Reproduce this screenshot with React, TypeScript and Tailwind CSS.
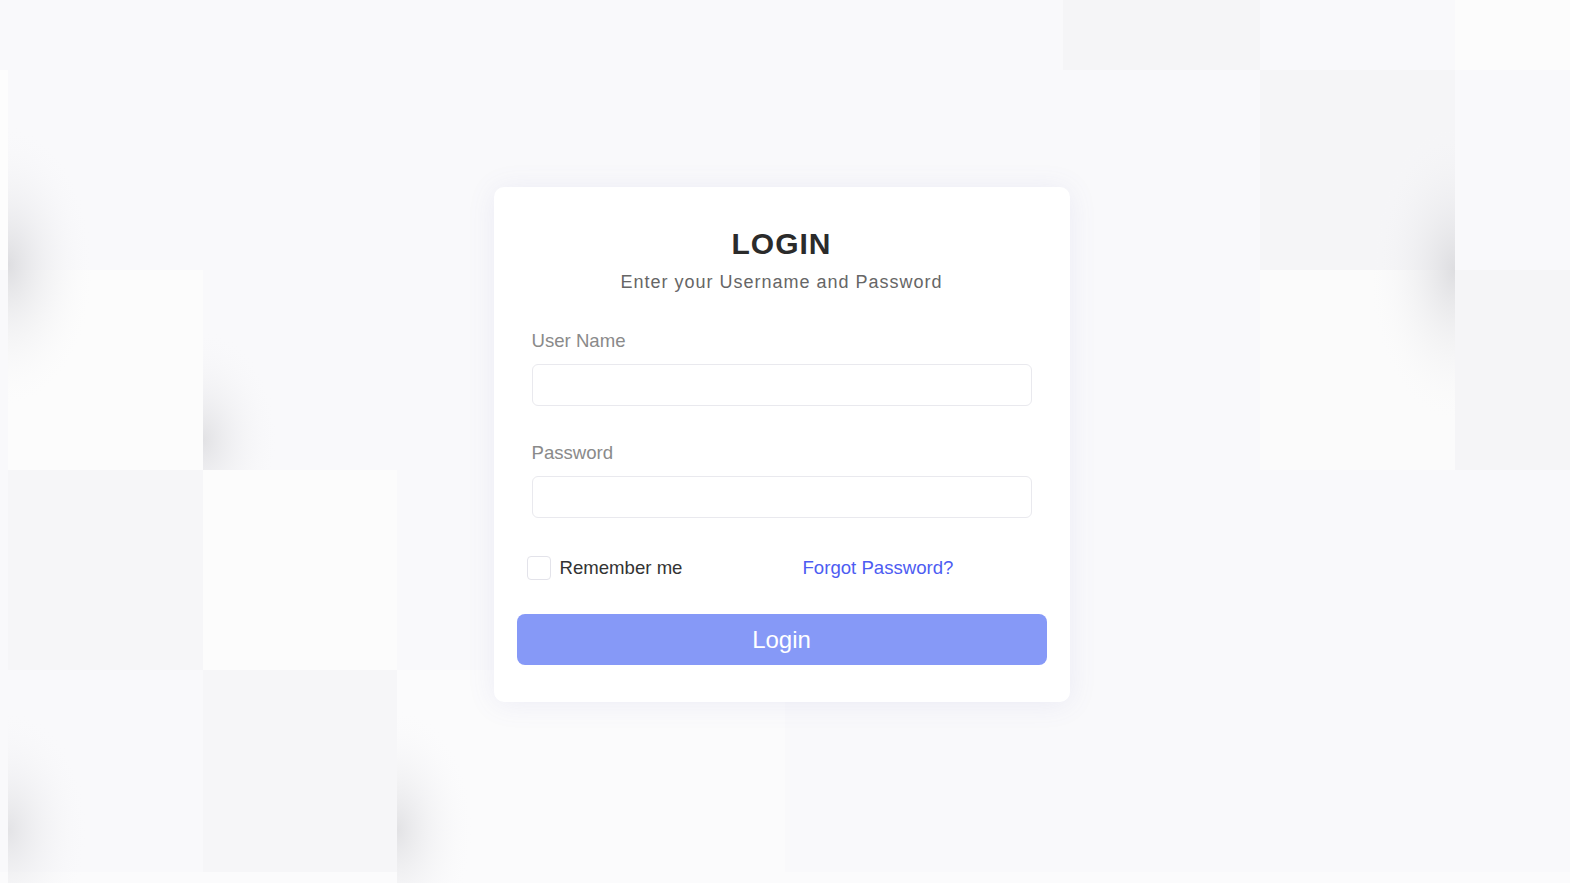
import React from 'react'

const font = { fontFamily: '"Liberation Sans", Arial, sans-serif' }

// soft tiled backdrop, drawn as one picture
function Backdrop() {
  return (
    <svg className="absolute inset-0 h-full w-full" viewBox="0 0 1570 883" preserveAspectRatio="none">
      <defs>
        <radialGradient id="sh" cx="0.5" cy="0.5" r="0.5">
          <stop offset="0" stopColor="#dcdcdf" stopOpacity="0.95" />
          <stop offset="0.45" stopColor="#e7e7ea" stopOpacity="0.45" />
          <stop offset="1" stopColor="#f9f9fb" stopOpacity="0" />
        </radialGradient>
        <clipPath id="cL1"><rect x="8" y="0" width="300" height="883" /></clipPath>
        <clipPath id="cL2"><rect x="203" y="270" width="194" height="200" /></clipPath>
        <clipPath id="cL3"><rect x="397" y="670" width="194" height="213" /></clipPath>
        <clipPath id="cR1"><rect x="1200" y="0" width="255" height="470" /></clipPath>
      </defs>
      <rect x="0" y="0" width="1570" height="883" fill="#f9f9fb" />
      {/* left side tiles */}
      <rect x="0" y="70" width="8" height="200" fill="#fdfdfd" />
      <rect x="8" y="270" width="195" height="200" fill="#fcfcfc" />
      <rect x="8" y="470" width="195" height="200" fill="#f6f6f8" />
      <rect x="203" y="470" width="194" height="200" fill="#fcfcfc" />
      <rect x="203" y="670" width="194" height="202" fill="#f6f6f8" />
      <rect x="397" y="670" width="194" height="202" fill="#fbfbfc" />
      <rect x="591" y="700" width="194" height="172" fill="#fbfbfc" />
      <rect x="0" y="872" width="1570" height="11" fill="#fbfbfc" />
      {/* right side tiles */}
      <rect x="1063" y="0" width="197" height="70" fill="#f5f5f7" />
      <rect x="1455" y="0" width="115" height="70" fill="#fcfcfc" />
      <rect x="1260" y="70" width="195" height="200" fill="#f5f5f7" />
      <rect x="1260" y="270" width="195" height="200" fill="#fbfbfb" />
      <rect x="1455" y="270" width="115" height="200" fill="#f5f5f7" />
      {/* shadows along tile edges */}
      <g clipPath="url(#cL1)">
        <ellipse cx="8" cy="265" rx="85" ry="140" fill="url(#sh)" />
        <ellipse cx="8" cy="830" rx="80" ry="120" fill="url(#sh)" opacity="0.8" />
      </g>
      <g clipPath="url(#cL2)">
        <ellipse cx="203" cy="440" rx="75" ry="110" fill="url(#sh)" opacity="0.85" />
      </g>
      <g clipPath="url(#cL3)">
        <ellipse cx="397" cy="830" rx="75" ry="120" fill="url(#sh)" opacity="0.85" />
      </g>
      <g clipPath="url(#cR1)">
        <ellipse cx="1455" cy="270" rx="85" ry="150" fill="url(#sh)" />
      </g>
    </svg>
  )
}

export default function App() {
  return (
    <div style={font} className="relative h-[883px] w-full overflow-hidden bg-[#f9f9fb]">
      <Backdrop />
      <div className="relative flex h-full items-center justify-center pt-[6px] pr-[7px]">
        <div className="w-[576px] rounded-[10px] bg-white pt-[39px] pb-[37px] shadow-[0_2px_28px_rgba(110,110,190,0.10)]">
          <h1 className="text-center text-[30px] leading-[36px] font-bold tracking-[1px] text-[#2b2b2b]">LOGIN</h1>
          <p className="mt-[8px] text-center text-[18px] leading-[24px] tracking-[1px] text-[#666666]">
            Enter your Username and Password
          </p>

          <div className="mx-auto mt-[35px] w-[500px]">
            <label className="block text-[18.6px] leading-[24px] text-[#8a8a8a]">User Name</label>
            <input
              type="text"
              className="mt-[11px] block h-[42px] w-full rounded-[6px] border border-[#e9e9ee] bg-white px-3 outline-none"
            />
            <label className="mt-[35px] block text-[18.6px] leading-[24px] text-[#8a8a8a]">Password</label>
            <input
              type="password"
              className="mt-[11px] block h-[42px] w-full rounded-[6px] border border-[#e9e9ee] bg-white px-3 outline-none"
            />
          </div>

          <div className="mx-auto mt-[38px] grid w-[510px] grid-cols-2 items-center">
            <label className="flex items-center gap-[9px] text-[18.6px] leading-[24px] text-[#333333]">
              <span className="block h-[24px] w-[24px] rounded-[4px] border border-[#e3e3ea] bg-white" />
              Remember me
            </label>
            <a href="#" className="pl-[21px] text-[18.6px] leading-[24px] text-[#4d5cf2]">
              Forgot Password?
            </a>
          </div>

          <button className="mx-auto mt-[34px] block h-[51px] w-[530px] rounded-[8px] bg-[#8699f7] text-[24px] text-white">
            Login
          </button>
        </div>
      </div>
    </div>
  )
}
